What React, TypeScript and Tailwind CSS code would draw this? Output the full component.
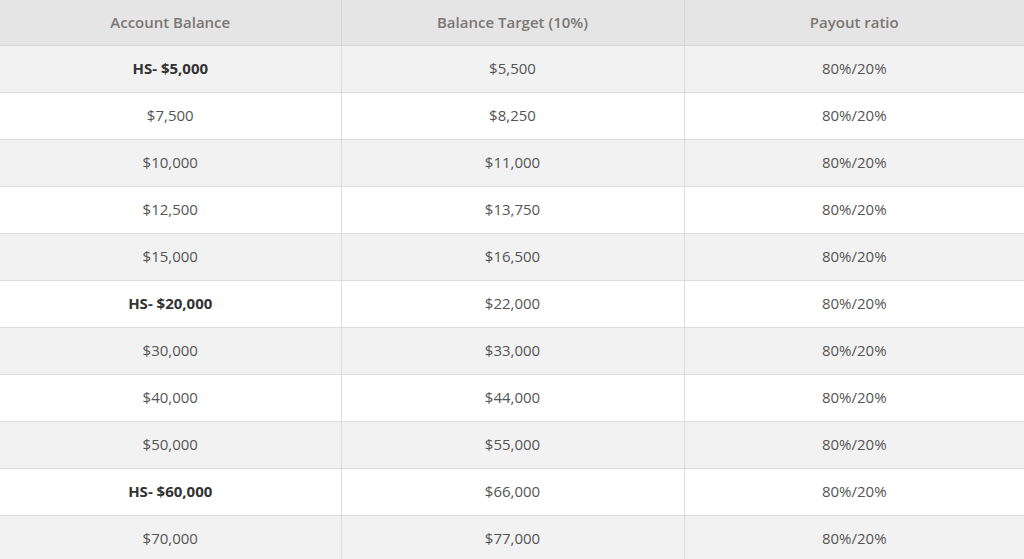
const rows = [
  { balance: 'HS- $5,000', target: '$5,500', bold: true },
  { balance: '$7,500', target: '$8,250' },
  { balance: '$10,000', target: '$11,000' },
  { balance: '$12,500', target: '$13,750' },
  { balance: '$15,000', target: '$16,500' },
  { balance: 'HS- $20,000', target: '$22,000', bold: true },
  { balance: '$30,000', target: '$33,000' },
  { balance: '$40,000', target: '$44,000' },
  { balance: '$50,000', target: '$55,000' },
  { balance: 'HS- $60,000', target: '$66,000', bold: true },
  { balance: '$70,000', target: '$77,000' },
];

export default function App() {
  return (
    <div className="w-[1024px] h-[559px] overflow-hidden bg-white font-['Open_Sans',sans-serif] text-[15px]">
      <table className="w-full table-fixed border-collapse text-center">
        <thead>
          <tr className="bg-[#e5e5e5] border-b border-[#d6d6d6]">
            <th className="h-[45px] w-[341px] font-semibold text-[#7b7773] border-r border-[#d6d6d6]">Account Balance</th>
            <th className="h-[45px] w-[343px] font-semibold text-[#7b7773] border-r border-[#d6d6d6]">Balance Target (10%)</th>
            <th className="h-[45px] font-semibold text-[#7b7773]">Payout ratio</th>
          </tr>
        </thead>
        <tbody>
          {rows.map((r, i) => (
            <tr key={r.balance} className={`border-b border-[#dcdcdc] ${i % 2 === 0 ? 'bg-[#f2f2f2]' : 'bg-white'}`}>
              <td className={`h-[47px] border-r border-[#dcdcdc] ${r.bold ? 'font-bold text-[#333333]' : 'text-[#555555]'}`}>{r.balance}</td>
              <td className="h-[47px] border-r border-[#dcdcdc] text-[#555555]">{r.target}</td>
              <td className="h-[47px] text-[#555555]">80%/20%</td>
            </tr>
          ))}
        </tbody>
      </table>
    </div>
  );
}
